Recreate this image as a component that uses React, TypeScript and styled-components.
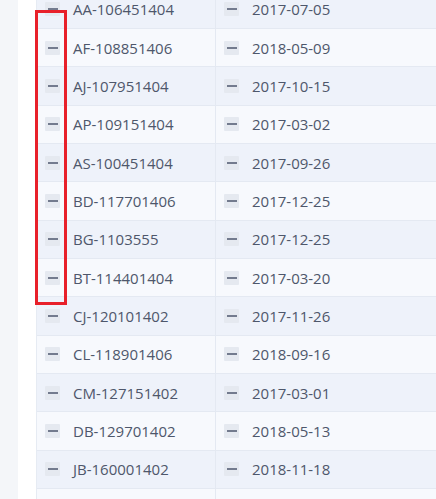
import React from "react";
import styled, { createGlobalStyle } from "styled-components";

const GlobalStyle = createGlobalStyle`
  html, body { margin: 0; padding: 0; background: #ffffff; overflow: hidden; }
  body { font-family: "Open Sans", "Noto Sans", sans-serif; }
`;

const Page = styled.div`
  position: relative;
  display: flex;
  align-items: flex-start;
  width: 436px;
  height: 499px;
  overflow: hidden;
  background: #ffffff;
`;

const SideStrip = styled.div`
  flex: 0 0 18px;
  align-self: stretch;
  background: #f4f6f9;
`;

const Gutter = styled.div`
  flex: 0 0 18px;
  align-self: stretch;
  background: #ffffff;
`;

const Table = styled.div`
  flex: 0 0 460px;
  margin-top: -9.33px;
  display: flex;
  flex-direction: column;
  border-left: 1px solid #e6ebf3;
`;

const Row = styled.div<{ $striped: boolean }>`
  display: grid;
  flex: 0 0 auto;
  grid-template-columns: 179px 1fr;
  height: 38.33px;
  box-sizing: border-box;
  border-bottom: 1px solid #e4e9f2;
  background: ${(p) => (p.$striped ? "#eef2fa" : "#f7f9fd")};
`;

const Cell = styled.div<{ $divider?: boolean }>`
  display: flex;
  align-items: center;
  gap: 13px;
  padding-left: 8px;
  box-sizing: border-box;
  border-right: ${(p) => (p.$divider ? "1px solid #e4e9f2" : "none")};
  font-size: 15px;
  color: #4e576b;
  white-space: nowrap;
`;

const Toggle = styled.span`
  flex: 0 0 15px;
  width: 15px;
  height: 14px;
  display: flex;
  align-items: center;
  justify-content: center;
  background: #e5e9f0;
  border-radius: 1px;
  &::after {
    content: "";
    width: 10px;
    height: 2px;
    background: #737b8e;
  }
`;

const Highlight = styled.div`
  position: absolute;
  left: 35px;
  top: 10px;
  width: 32px;
  height: 295px;
  box-sizing: border-box;
  border: 3px solid #e8202a;
  pointer-events: none;
`;

const rows: [string, string][] = [
  ["AA-106451404", "2017-07-05"],
  ["AF-108851406", "2018-05-09"],
  ["AJ-107951404", "2017-10-15"],
  ["AP-109151404", "2017-03-02"],
  ["AS-100451404", "2017-09-26"],
  ["BD-117701406", "2017-12-25"],
  ["BG-1103555", "2017-12-25"],
  ["BT-114401404", "2017-03-20"],
  ["CJ-120101402", "2017-11-26"],
  ["CL-118901406", "2018-09-16"],
  ["CM-127151402", "2017-03-01"],
  ["DB-129701402", "2018-05-13"],
  ["JB-160001402", "2018-11-18"],
  ["", ""],
];

export default function App() {
  return (
    <>
      <GlobalStyle />
      <Page>
        <SideStrip />
        <Gutter />
        <Table>
          {rows.map(([code, date], i) => (
            <Row key={i} $striped={i % 2 === 0}>
              <Cell $divider>
                {code && <Toggle />}
                {code}
              </Cell>
              <Cell>
                {date && <Toggle />}
                {date}
              </Cell>
            </Row>
          ))}
        </Table>
        <Highlight />
      </Page>
    </>
  );
}
